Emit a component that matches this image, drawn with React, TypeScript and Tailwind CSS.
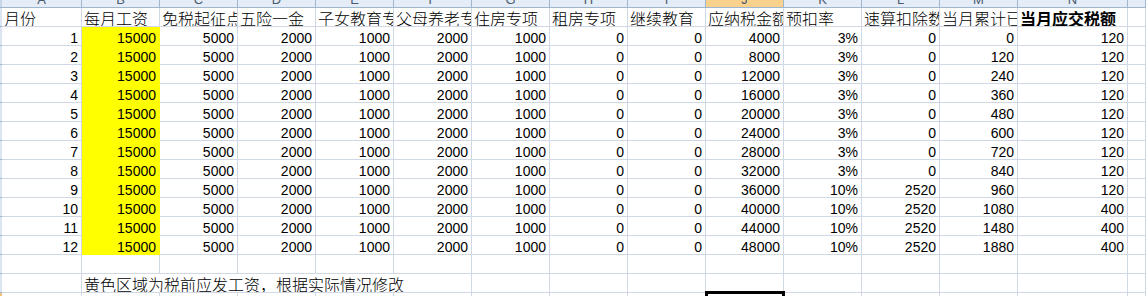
import * as React from "react";

const letters = ["A", "B", "C", "D", "E", "F", "G", "H", "I", "J", "K", "L", "M", "N", ""];

const headers = [
  "月份",
  "每月工资",
  "免税起征点",
  "五险一金",
  "子女教育专项",
  "父母养老专项",
  "住房专项",
  "租房专项",
  "继续教育",
  "应纳税金额",
  "预扣率",
  "速算扣除数",
  "当月累计已缴税额",
  "当月应交税额",
  "",
];

const cumulative = [0, 120, 240, 360, 480, 600, 720, 840, 960, 1080, 1480, 1880];

const rows = Array.from({ length: 12 }, (_, i) => {
  const m = i + 1;
  return [
    m,
    15000,
    5000,
    2000,
    1000,
    2000,
    1000,
    0,
    0,
    4000 * m,
    m <= 8 ? "3%" : "10%",
    m <= 8 ? 0 : 2520,
    cumulative[i],
    m <= 9 ? 120 : 400,
  ];
});

const zh = "font-['Noto_Sans_CJK_SC',sans-serif] text-[16px] leading-[16px]";
const num = "font-['Liberation_Sans',sans-serif] text-[14px] leading-[14px]";
const grid = "border-r border-b border-[#d0d7e5]";

const Cell: React.FC<{ children?: React.ReactNode; className?: string }> = ({
  children,
  className,
}) => (
  <div className={`flex items-end overflow-hidden whitespace-nowrap ${className || ""}`}>
    {children}
  </div>
);

const Strip: React.FC<{ active?: boolean }> = ({ active }) => (
  <div
    className={`border-b border-[#9eb6ce] ${active ? "bg-[#f6c27a]" : "bg-[#dbe5f1]"}`}
  />
);

export default function App() {
  return (
    <div className="w-[1146px] h-[296px] overflow-hidden bg-white text-black">
      <div className="grid grid-cols-[2px_80px_repeat(12,78px)_110px_18px] grid-rows-[8px_repeat(16,19px)]">
        {/* column letters */}
        <div className="bg-[#c6d5e7] border-b border-[#9eb6ce]" />
        {letters.map((l, i) => (
          <div
            key={"c" + i}
            className={`overflow-hidden border-b border-r border-[#9eb6ce] ${
              l === "J" ? "bg-[#f8d28c]" : "bg-[#e4ecf7]"
            }`}
          >
            <span className="block -mt-[7px] text-center font-['Liberation_Sans',sans-serif] text-[13px] leading-[14px] text-[#4a5a6e]">
              {l}
            </span>
          </div>
        ))}

        {/* header row */}
        <Strip />
        {headers.map((h, i) => (
          <Cell key={"h" + i} className={`${grid} pl-[2px]`}>
            <span className={`${zh} ${i === 13 ? "font-bold" : "font-light"}`}>{h}</span>
          </Cell>
        ))}

        {/* data rows */}
        {rows.map((r, ri) => (
          <React.Fragment key={"r" + ri}>
            <Strip />
            {r.map((v, ci) => (
              <Cell
                key={ci}
                className={`justify-end pr-[3px] ${
                  ci === 1
                    ? "bg-[#ffff00] border-r border-b border-[#ffff00]"
                    : grid
                }`}
              >
                <span className={num}>{v}</span>
              </Cell>
            ))}
            <Cell className={grid} />
          </React.Fragment>
        ))}

        {/* empty row */}
        <Strip />
        {letters.map((_, i) => (
          <Cell key={"e" + i} className={grid} />
        ))}

        {/* note row */}
        <Strip />
        <Cell className={grid} />
        <Cell className={`col-span-5 ${grid} pl-[2px]`}>
          <span className={`${zh} font-light`}>黄色区域为税前应发工资，根据实际情况修改</span>
        </Cell>
        {letters.slice(6).map((_, i) => (
          <Cell key={"n" + i} className={grid} />
        ))}

        {/* selected row */}
        <Strip active />
        {letters.map((l, i) => (
          <div key={"s" + i} className={`relative ${grid}`}>
            {l === "J" && (
              <div className="absolute -left-[1px] -top-[2px] w-[80px] h-[21px] border-[3px] border-black" />
            )}
          </div>
        ))}
      </div>
    </div>
  );
}
